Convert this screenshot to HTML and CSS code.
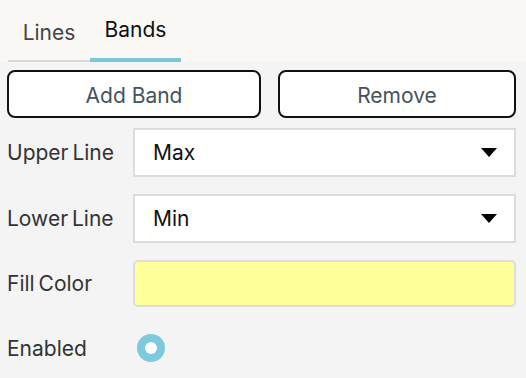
FILE: index.html
```html
<!DOCTYPE html>
<html>
<head>
<meta charset="utf-8">
<link rel="stylesheet" href="styles.css">
</head>
<body>
<div class="header">
  <div class="tabs">
    <div class="tab">Lines</div>
    <div class="tab active">Bands</div>
  </div>
</div>
<div class="buttons">
  <button class="btn">Add Band</button>
  <button class="btn">Remove</button>
</div>
<div class="form">
  <div class="row">
    <div class="label">Upper Line</div>
    <div class="select"><span>Max</span><span class="arrow"></span></div>
  </div>
  <div class="row">
    <div class="label">Lower Line</div>
    <div class="select"><span>Min</span><span class="arrow"></span></div>
  </div>
  <div class="row">
    <div class="label">Fill Color</div>
    <div class="color"></div>
  </div>
  <div class="row">
    <div class="label">Enabled</div>
    <div class="radio"><span class="dot"></span></div>
  </div>
</div>
</body>
</html>
```
FILE: styles.css
```css
html, body {
  margin: 0;
  padding: 0;
}
body {
  background: #f4f4f4;
  font-family: Inter, "Noto Sans", sans-serif;
  font-size: 21px;
  color: #333;
  width: 526px;
  height: 378px;
  overflow: hidden;
}
.header {
  background: #f9f8f5;
  height: 62px;
  box-sizing: border-box;
  padding-left: 8px;
}
.tabs {
  display: flex;
  height: 62px;
}
.tab {
  box-sizing: border-box;
  height: 62px;
  line-height: 24px;
  text-align: center;
  color: #444;
  border-bottom: 2px solid #d9d9d9;
  padding-top: 21px;
  width: 82px;
}
.tab.active {
  width: 91px;
  color: #111;
  border-bottom: 4px solid #7cc7d9;
  padding-top: 18px;
}
.buttons {
  display: grid;
  grid-template-columns: 254px 238px;
  column-gap: 17px;
  padding: 8px 0 0 7px;
}
.btn {
  height: 48px;
  box-sizing: border-box;
  background: #fff;
  border: 2px solid #111;
  border-radius: 8px;
  font-family: inherit;
  font-size: 21px;
  color: #44535e;
  padding: 2px 0 0 0;
}
.form {
  display: flex;
  flex-direction: column;
  padding: 10px 10px 0 7px;
  row-gap: 17px;
}
.row {
  display: flex;
  align-items: center;
}
.label {
  width: 126px;
  flex: none;
  color: #333;
  word-spacing: -2px;
}
.select {
  flex: 1;
  height: 49px;
  box-sizing: border-box;
  background: #fff;
  border: 2px solid #dcdcdc;
  display: flex;
  align-items: center;
  justify-content: space-between;
  padding: 0 17px 0 18px;
  color: #111;
}
.arrow {
  width: 0;
  height: 0;
  border-left: 8px solid transparent;
  border-right: 8px solid transparent;
  border-top: 9px solid #000;
}
.color {
  flex: 1;
  height: 47px;
  box-sizing: border-box;
  background: #ffff99;
  border: 2px solid #dddddd;
  border-radius: 5px;
}
.row:last-child {
  margin-top: 10px;
}
.radio {
  margin-left: 4px;
  width: 28px;
  height: 28px;
  border-radius: 50%;
  background: #7ec9db;
  display: flex;
  align-items: center;
  justify-content: center;
}
.dot {
  width: 12px;
  height: 12px;
  border-radius: 50%;
  background: #fff;
}
```
